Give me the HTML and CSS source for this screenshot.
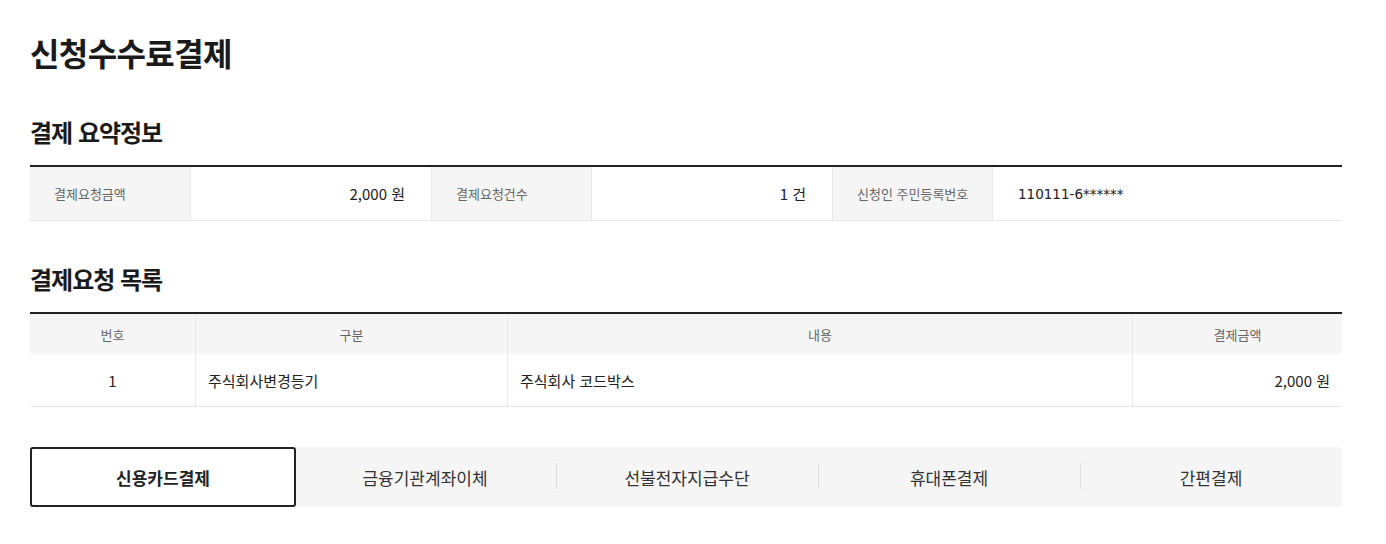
FILE: index.html
```html
<!DOCTYPE html>
<html lang="ko">
<head>
  <meta charset="UTF-8">
  <meta name="viewport" content="width=device-width, initial-scale=1.0">
  <title>신청수수료결제</title>
  <link rel="stylesheet" href="styles.css">
</head>
<body>
  <main class="page">
    <h1 class="page-title">신청수수료결제</h1>

    <!-- 결제 요약정보 -->
    <h2 class="section-title">결제 요약정보</h2>
    <div class="summary">
      <div class="summary-label">결제요청금액</div>
      <div class="summary-value num">2,000 원</div>
      <div class="summary-label">결제요청건수</div>
      <div class="summary-value num">1 건</div>
      <div class="summary-label">신청인 주민등록번호</div>
      <div class="summary-value id-no">110111-6******</div>
    </div>

    <!-- 결제요청 목록 -->
    <h2 class="section-title list-title">결제요청 목록</h2>
    <div class="list">
      <div class="list-row list-head">
        <div class="col col-no">번호</div>
        <div class="col col-type">구분</div>
        <div class="col col-desc">내용</div>
        <div class="col col-amount">결제금액</div>
      </div>
      <div class="list-row">
        <div class="col col-no">1</div>
        <div class="col col-type">주식회사변경등기</div>
        <div class="col col-desc">주식회사 코드박스</div>
        <div class="col col-amount">2,000 원</div>
      </div>
    </div>

    <!-- 결제수단 탭 -->
    <div class="pay-tabs">
      <button class="pay-tab active">신용카드결제</button>
      <button class="pay-tab">금융기관계좌이체</button>
      <button class="pay-tab">선불전자지급수단</button>
      <button class="pay-tab">휴대폰결제</button>
      <button class="pay-tab">간편결제</button>
    </div>
  </main>
</body>
</html>
```

FILE: styles.css
```css
/* Basic Styles */
body {
  font-family: "Noto Sans CJK KR", "Noto Sans", sans-serif;
  margin: 0;
  padding: 0;
  background: #fff;
  color: #222;
}

.page {
  width: 1312px;
  margin-left: 30px;
  padding-top: 31px;
}

.page-title {
  margin: 0;
  font-size: 32px;
  line-height: 42px;
  font-weight: 700;
  letter-spacing: -0.6px;
  color: #1a1a1a;
}

.section-title {
  margin: 43px 0 17px;
  font-size: 24px;
  line-height: 32px;
  font-weight: 700;
  letter-spacing: -1px;
  color: #1a1a1a;
}

.section-title.list-title {
  margin-top: 42px;
}

/* Summary */
.summary {
  display: grid;
  grid-template-columns: 160px 241px 160px 241px 160px 1fr;
  border-top: 2px solid #222;
  border-bottom: 1px solid #e6e6e6;
}

.summary > div {
  height: 53px;
  display: flex;
  align-items: center;
  box-sizing: border-box;
}

.summary > div + div {
  border-left: 1px solid #e8e8e8;
}

.summary-label {
  background: #f5f5f5;
  padding-left: 24px;
  font-size: 13px;
  color: #666;
}

.summary-value {
  padding: 0 26px 0 25px;
  font-size: 15px;
  color: #222;
}

.summary-value.num {
  justify-content: flex-end;
}

.id-no {
  font-family: "DejaVu Sans", sans-serif;
  font-size: 13.5px;
}

/* List */
.list {
  border-top: 2px solid #222;
  border-bottom: 1px solid #e6e6e6;
}

.list-row {
  display: flex;
  height: 52px;
}

.list-head {
  height: 40px;
  background: #f5f5f5;
}

.col {
  display: flex;
  align-items: center;
  box-sizing: border-box;
  padding: 0 12px;
  font-size: 15px;
  color: #222;
}

.col + .col {
  border-left: 1px solid #e8e8e8;
}

.list-head .col {
  justify-content: center;
  font-size: 13px;
  color: #666;
}

.col-no {
  width: 165px;
  justify-content: center;
}

.col-type {
  width: 312px;
}

.col-desc {
  width: 625px;
}

.col-amount {
  width: 210px;
  justify-content: flex-end;
}

/* Payment tabs */
.pay-tabs {
  display: flex;
  margin-top: 40px;
  height: 60px;
  background: #f5f5f5;
  border-radius: 4px;
}

.pay-tab {
  flex: 1;
  position: relative;
  border: none;
  background: none;
  font-family: inherit;
  font-size: 17px;
  color: #333;
  cursor: pointer;
  padding: 0;
}

.pay-tab + .pay-tab::before {
  content: "";
  position: absolute;
  left: 0;
  top: 16px;
  height: 26px;
  border-left: 1px solid #dcdcdc;
}

.pay-tab.active {
  background: #fff;
  border: 2px solid #222;
  border-radius: 3px;
  font-weight: 700;
  color: #222;
  margin-right: -2px;
}

.pay-tab.active + .pay-tab::before {
  display: none;
}
```
